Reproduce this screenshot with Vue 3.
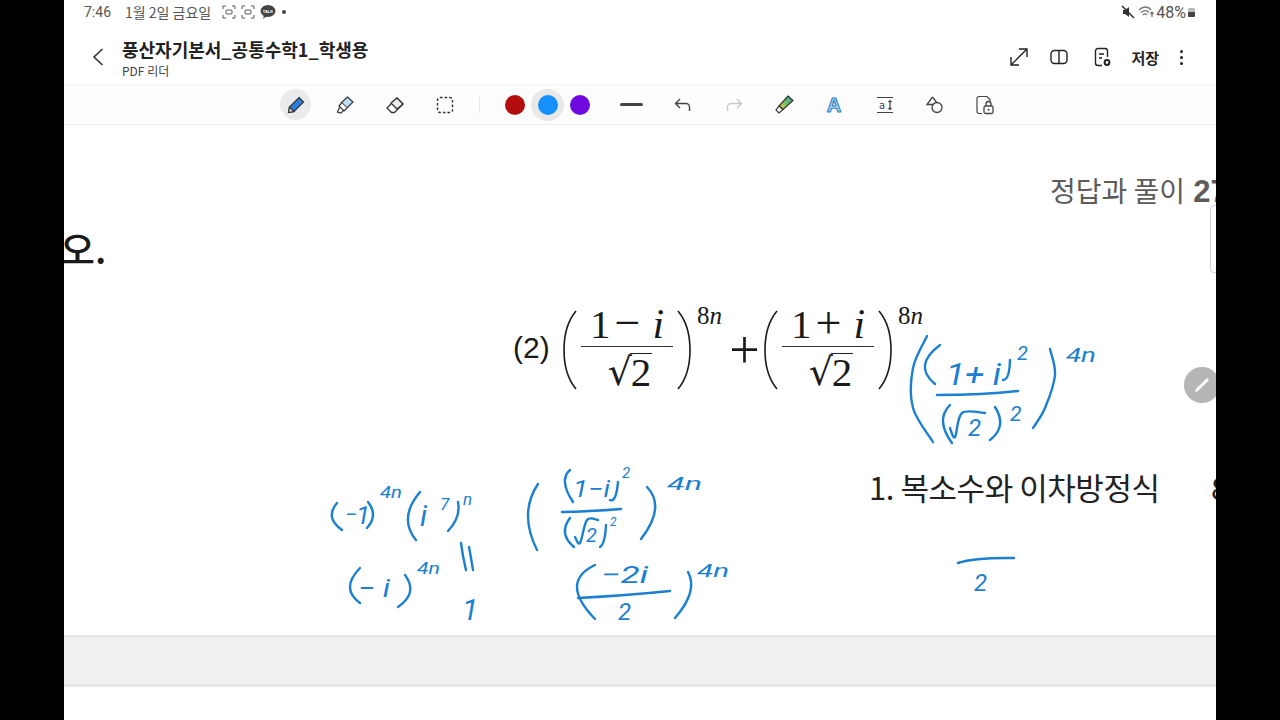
<script setup>
// pen strokes on the page, in screen coordinates
const strokes = [
  // top right fraction
  [[927,336],[913,368],[913,408],[933,442]],
  [[940,345],[925,365],[935,384]],
  [[1010,360],[1008,375],[1003,380]],
  [[937,395],[980,394],[1018,391]],
  [[950,405],[943,422],[952,443]],
  [[950,428],[955,437],[962,413],[985,413]],
  [[995,407],[1000,425],[990,440]],
  [[1050,349],[1055,375],[1045,408],[1033,428]],
  // left column
  [[337,503],[332,517],[342,530]],
  [[368,502],[373,515],[367,528]],
  [[420,492],[408,517],[416,540]],
  [[458,502],[457,517],[448,531]],
  [[360,568],[350,587],[360,603]],
  [[405,575],[410,592],[398,607]],
  // the two upright lines of the sideways equals
  [[461,543],[463,556],[466,570]],
  [[469,547],[471,558],[473,570]],
  // middle column
  [[538,484],[528,515],[537,550]],
  [[570,470],[565,483],[573,502]],
  [[618,482],[615,497],[610,500]],
  [[562,512],[590,511],[621,509]],
  [[570,518],[565,533],[574,547]],
  [[575,537],[580,543],[587,520],[598,520]],
  [[606,525],[604,540],[600,547]],
  [[647,487],[655,510],[641,539]],
  [[595,565],[577,587],[595,619]],
  [[578,598],[625,595],[670,591]],
  [[688,572],[690,593],[675,618]],
  // lone bar
  [[958,563],[980,559],[1014,558]],
]

// what was written with the pen, kept as text
const notes = [
  { x: 946, y: 385, size: 32, t: '1+ i', w: 55 },
  { x: 1017, y: 360, size: 20, t: '2' },
  { x: 968, y: 436, size: 24, t: '2' },
  { x: 1010, y: 421, size: 21, t: '2' },
  { x: 1066, y: 362, size: 20, t: '4n', w: 30 },
  { x: 345, y: 522, size: 22, t: '−' },
  { x: 356, y: 524, size: 26, t: '1' },
  { x: 380, y: 498, size: 16, t: '4n', w: 22 },
  { x: 420, y: 526, size: 30, t: 'i' },
  { x: 440, y: 510, size: 17, t: '7' },
  { x: 463, y: 505, size: 17, t: 'n' },
  { x: 358, y: 597, size: 26, t: '− i', w: 32 },
  { x: 417, y: 574, size: 16, t: '4n', w: 23 },
  { x: 462, y: 620, size: 30, t: '1' },
  { x: 573, y: 497, size: 23, t: '1−i', w: 37 },
  { x: 622, y: 478, size: 15, t: '2' },
  { x: 586, y: 542, size: 20, t: '2' },
  { x: 610, y: 526, size: 12, t: '2' },
  { x: 667, y: 490, size: 18, t: '4n', w: 35 },
  { x: 601, y: 583, size: 24, t: '−2i', w: 47 },
  { x: 618, y: 620, size: 24, t: '2' },
  { x: 697, y: 577, size: 18, t: '4n', w: 32 },
  { x: 974, y: 591, size: 24, t: '2' },
]

// smooth line through the points
function toPath(pts) {
  const [a, b, c] = pts
  if (pts.length === 3) {
    const cx = 2 * b[0] - (a[0] + c[0]) / 2
    const cy = 2 * b[1] - (a[1] + c[1]) / 2
    return `M${a[0]} ${a[1]} Q${cx} ${cy} ${c[0]} ${c[1]}`
  }
  let d = `M${pts[0][0]} ${pts[0][1]}`
  for (let i = 0; i < pts.length - 1; i++) {
    const p0 = pts[i - 1] || pts[i]
    const p1 = pts[i]
    const p2 = pts[i + 1]
    const p3 = pts[i + 2] || p2
    const c1x = p1[0] + (p2[0] - p0[0]) / 6
    const c1y = p1[1] + (p2[1] - p0[1]) / 6
    const c2x = p2[0] - (p3[0] - p1[0]) / 6
    const c2y = p2[1] - (p3[1] - p1[1]) / 6
    d += ` C${c1x} ${c1y} ${c2x} ${c2y} ${p2[0]} ${p2[1]}`
  }
  return d
}

const terms = ['−', '+']
</script>

<template>
  <div class="screen">
    <div class="tablet">
      <div class="status">
        <span class="time">7:46</span>
        <span class="date">1월 2일 금요일</span>
        <svg class="shot" width="14" height="14" viewBox="0 0 14 14"><path d="M1 4V1h3M10 1h3v3M13 10v3h-3M4 13H1v-3" /><rect x="4" y="5" width="6" height="4" rx="1" /></svg>
        <svg class="shot" width="14" height="14" viewBox="0 0 14 14"><path d="M1 4V1h3M10 1h3v3M13 10v3h-3M4 13H1v-3" /><rect x="4" y="5" width="6" height="4" rx="1" /></svg>
        <svg width="16" height="14" viewBox="0 0 16 14"><ellipse cx="8" cy="6" rx="7.5" ry="6" fill="#444" /><path d="M4 10l-1 4 4-3z" fill="#444" /><text x="8" y="8" class="talk">TALK</text></svg>
        <span class="dot"></span>
        <span class="grow"></span>
        <svg width="14" height="14" viewBox="0 0 14 14"><path d="M2 5h2l4-3v10L4 9H2z" fill="#333" /><path d="M1 1l12 12" stroke="#333" stroke-width="1.6" /></svg>
        <svg class="wifi" width="16" height="14" viewBox="0 0 16 14"><path d="M1 5c4-4 9-4 12 0M3 7.500c3-2.500 6-2.500 8 0M5 10c1.500-1.500 3-1.500 4 0" /><path d="M14 7v5M12.500 9l1.500-2 1.500 2" /></svg>
        <span class="battery-text">48%</span>
        <span class="battery"><i></i></span>
      </div>

      <header class="appbar">
        <svg class="back" width="12" height="20" viewBox="0 0 12 20"><path d="M10.500 2L2 10l8.500 8" /></svg>
        <div class="title-box">
          <div class="title">풍산자기본서_공통수학1_학생용</div>
          <div class="sub">PDF 리더</div>
        </div>
        <div class="actions">
          <svg width="20" height="20" viewBox="0 0 20 20"><path d="M2 18L18 2M10 2h8v8M2 10v8h8" /></svg>
          <svg class="book" width="20" height="20" viewBox="0 0 20 20"><rect x="2" y="3.500" width="16" height="13" rx="3.500" /><path d="M10 3.500v13" /></svg>
          <svg class="doc" width="20" height="20" viewBox="0 0 20 20"><path d="M10 18.500H6a2.500 2.500 0 0 1-2.500-2.500V4A2.500 2.500 0 0 1 6 1.500h7A2.500 2.500 0 0 1 15.500 4v6M7 7h5M7 11h3" /><circle cx="15" cy="15.500" r="2.400" stroke-width="2" /></svg>
          <span class="save">저장</span>
          <span class="more"><i></i><i></i><i></i></span>
        </div>
      </header>

      <div class="toolbar">
        <span class="tool active">
          <svg width="20" height="20" viewBox="0 0 20 20"><path d="M13 2.500l4.500 4.500L8 16.500l-5.500 1 1-5.500z" fill="#2a7fdc" stroke="#333" stroke-width="1.200" /><path d="M3.500 12l4.500 4.500-5.500 1z" fill="#ddd" stroke="#333" stroke-width="1.200" /></svg>
        </span>
        <span class="tool">
          <svg width="20" height="20" viewBox="0 0 20 20"><path d="M12.500 2l5.500 5-6 6-5.500-5.500z" fill="#bcdcf7" stroke="#333" stroke-width="1.200" /><path d="M6.500 8L4 11l5 5 3-3M4.500 12.500L2.500 17l3.500 1 2-2.500" fill="#fff" stroke="#333" stroke-width="1.200" /></svg>
        </span>
        <span class="tool">
          <svg width="20" height="20" viewBox="0 0 20 20"><path d="M12 3l6 6-8.500 8.500-3 0L2 13z" fill="#fff" stroke="#333" stroke-width="1.300" stroke-linejoin="round" /><path d="M12 3l6 6-6 5-6-6z" fill="#eee" stroke="#333" stroke-width="1.300" stroke-linejoin="round" /></svg>
        </span>
        <span class="tool">
          <svg width="20" height="20" viewBox="0 0 20 20"><rect x="2.500" y="2.500" width="15" height="15" rx="2.500" fill="none" stroke="#333" stroke-width="1.400" stroke-dasharray="2.600 2" /></svg>
        </span>
        <span class="divider"></span>
        <span class="swatch"><i class="red"></i></span>
        <span class="swatch picked"><i class="blue"></i></span>
        <span class="swatch"><i class="purple"></i></span>
        <span class="pen-width"></span>
        <span class="tool undo">
          <svg width="20" height="20" viewBox="0 0 20 20"><path d="M7 4L2.500 8.500 7 13M3 8.500h10a3.500 3.500 0 0 1 3.500 3.500v4" fill="none" stroke="#444" stroke-width="1.400" /></svg>
        </span>
        <span class="tool redo">
          <svg width="20" height="20" viewBox="0 0 20 20"><path d="M13 4l4.500 4.500L13 13M17 8.500H7A3.500 3.500 0 0 0 3.500 12v4" fill="none" stroke="#c9c9c9" stroke-width="1.400" /></svg>
        </span>
        <span class="tool">
          <svg width="22" height="22" viewBox="0 0 22 22">
            <defs><linearGradient id="pen" x1="0" y1="1" x2="1" y2="0"><stop offset="0" stop-color="#e8d44c" /><stop offset=".5" stop-color="#6fbf5a" /><stop offset="1" stop-color="#3d8fd0" /></linearGradient></defs>
            <path d="M15 2l5 4.500L10 15.500 6 12z" fill="url(#pen)" stroke="#333" stroke-width="1.200" />
            <path d="M6 12l-3 4 3 3 4-3.500z" fill="#fff" stroke="#333" stroke-width="1.200" />
          </svg>
        </span>
        <span class="tool">
          <svg width="20" height="20" viewBox="0 0 20 20"><text x="10" y="16.500" class="outline-a">A</text></svg>
        </span>
        <span class="tool">
          <svg width="20" height="20" viewBox="0 0 20 20"><path d="M2 2.500h16M2 17.500h16M15 5.500v9M13.500 7L15 5.500 16.500 7M13.500 13l1.500 1.500 1.500-1.500" fill="none" stroke="#444" stroke-width="1.200" /><text x="7" y="13.500" class="small-a">a</text></svg>
        </span>
        <span class="tool">
          <svg width="20" height="20" viewBox="0 0 20 20"><path d="M7.500 2L2 9.500h6.500" fill="none" stroke="#444" stroke-width="1.300" /><path d="M7.500 2l4.500 6" fill="none" stroke="#444" stroke-width="1.300" /><circle cx="12" cy="12.500" r="5" fill="none" stroke="#444" stroke-width="1.300" /></svg>
        </span>
        <span class="tool">
          <svg width="20" height="20" viewBox="0 0 20 20"><path d="M7 18.500H4A2 2 0 0 1 2 16.500V3.500A2 2 0 0 1 4 1.500h8l3 3v2" fill="none" stroke="#444" stroke-width="1.200" /><rect x="9" y="11" width="9" height="7.500" rx="1.500" fill="none" stroke="#444" stroke-width="1.300" /><path d="M11 11V9a2.500 2.500 0 0 1 5 0v2" fill="none" stroke="#444" stroke-width="1.300" /><circle cx="13.500" cy="14.700" r="1" fill="#444" /></svg>
        </span>
      </div>

      <div class="page">
        <span class="big-end">오.</span>
        <span class="answer">정답과 풀이 <b>27</b></span>
        <span class="side-tab"></span>

        <div class="formula">
          <span class="label">(2)</span>
          <template v-for="(term, n) in terms" :key="n">
            <span v-if="n" class="plus">+</span>
            <svg class="paren" width="16" height="80" viewBox="0 0 16 80"><path d="M15 1C-1 20 -1 60 15 79" /></svg>
            <div class="frac">
              <div class="num">1<span class="op">{{ term }}</span><em>i</em></div>
              <div class="den"><span class="radical">√</span><span class="radicand">2</span></div>
            </div>
            <svg class="paren" width="16" height="80" viewBox="0 0 16 80"><path d="M1 1C17 20 17 60 1 79" /></svg>
            <sup class="power">8<em>n</em></sup>
          </template>
        </div>

        <span class="section">1. 복소수와 이차방정식</span>
        <span class="next-page">8</span>

        <svg class="ink" viewBox="64 125 1152 510" width="1152" height="510">
          <path v-for="(s, i) in strokes" :key="i" :d="toPath(s)" />
          <text
            v-for="(n, i) in notes"
            :key="'t' + i"
            :x="n.x"
            :y="n.y"
            :font-size="n.size"
            :textLength="n.w"
            :lengthAdjust="n.w ? 'spacingAndGlyphs' : undefined"
          >{{ n.t }}</text>
        </svg>

        <span class="fab">
          <svg width="20" height="20" viewBox="0 0 20 20"><path d="M15 3l2 2L6 16l-3 1 1-3z" fill="#fff" /></svg>
        </span>
      </div>

      <div class="gap"></div>
    </div>
  </div>
</template>

<style scoped>
.screen {
  display: flex;
  justify-content: center;
  height: 720px;
  background: #000;
  font-family: "Noto Sans CJK KR", "Noto Sans", sans-serif;
  color: #222;
}

.tablet {
  display: flex;
  flex-direction: column;
  width: 1152px;
  background: #fff;
  overflow: hidden;
}

.status {
  display: flex;
  align-items: center;
  height: 24px;
  padding: 0 21px 0 20px;
  font-size: 14px;
  color: #555;
  flex-shrink: 0;
}

.time { margin-right: 14px; font-family: Roboto, sans-serif; }
.date { margin-right: 11px; font-size: 14px; }
.shot { margin-right: 5px; fill: none; stroke: #555; stroke-width: 1; }
.talk { font-size: 4px; fill: #fff; text-anchor: middle; font-family: "Liberation Sans", sans-serif; font-weight: 700; }
.dot { width: 4px; height: 4px; margin-left: 6px; border-radius: 50%; background: #444; }
.grow { flex: 1; }
.wifi { margin-left: 3px; fill: none; stroke: #777; stroke-width: 1.300; }
.battery-text { margin-left: 2px; font-family: Roboto, sans-serif; font-size: 16px; color: #555; }
.battery { position: relative; width: 7px; height: 9px; margin-left: 2px; background: #bbb; border-radius: 1px; overflow: hidden; }
.battery i { position: absolute; left: 0; right: 0; bottom: 0; height: 5px; background: #444; }

.appbar {
  display: flex;
  align-items: center;
  height: 60px;
  flex-shrink: 0;
}

.back { margin-left: 28px; margin-top: 6px; fill: none; stroke: #333; stroke-width: 1.600; }

.title-box { margin-left: 18px; padding-top: 8px; }
.title { font-size: 18px; font-weight: 700; line-height: 24px; color: #222; }
.sub { font-size: 12px; line-height: 16px; color: #444; margin-top: 2px; }

.actions {
  display: flex;
  align-items: center;
  margin-left: auto;
  padding-right: 33px;
  padding-top: 6px;
  height: 100%;
  box-sizing: border-box;
}

.actions svg { margin-left: 20px; fill: none; stroke: #222; stroke-width: 1.400; }
.actions .doc { margin-left: 23px; }
.save { margin-left: 19px; font-size: 15px; font-weight: 700; }
.more { display: flex; flex-direction: column; gap: 3px; margin-left: 21px; }
.more i { width: 3px; height: 3px; border-radius: 50%; background: #222; }

.toolbar {
  display: flex;
  align-items: center;
  box-sizing: border-box;
  height: 41px;
  padding-left: 207px;
  border-top: 1px solid #f4f4f4;
  border-bottom: 1px solid #efefef;
  background: #fdfdfd;
  flex-shrink: 0;
}

.tool {
  display: flex;
  align-items: center;
  justify-content: center;
  width: 49.600px;
  height: 31px;
}

.undo ~ .tool { width: 50.200px; }
.redo { margin-left: 1px; }

.tool.active { position: relative; }
.tool.active::before {
  content: "";
  position: absolute;
  left: 9px;
  top: 0;
  width: 31px;
  height: 31px;
  border-radius: 50%;
  background: #ebebeb;
}
.tool.active svg { position: relative; }

.divider { width: 1px; height: 16px; margin: 0 19px 0 9.500px; background: #e6e6e6; }

.swatch {
  display: flex;
  align-items: center;
  justify-content: center;
  width: 32.500px;
  height: 32px;
  border-radius: 50%;
}
.swatch i { width: 20px; height: 20px; border-radius: 50%; }
.swatch.picked { background: #e8e8e8; }
.red { background: #b50d0d; }
.blue { background: #1590fb; }
.purple { background: #6e0ae0; }

.pen-width { width: 23px; height: 3px; margin-left: 24px; border-radius: 2px; background: #444; }
.undo { margin-left: 15px; }

.outline-a { font-family: "Liberation Sans", sans-serif; font-size: 20px; font-weight: 700; text-anchor: middle; fill: #bcdcf7; stroke: #2a7fc8; stroke-width: 1.100; stroke-linejoin: round; }
.small-a { font-family: "DejaVu Sans Mono", monospace; font-size: 10px; text-anchor: middle; fill: #444; }

.page {
  position: relative;
  height: 510px;
  flex-shrink: 0;
  overflow: hidden;
}

.big-end {
  position: absolute;
  left: -4px;
  top: 98px;
  font-size: 38px;
  line-height: 50px;
  font-weight: 500;
  color: #1a1a1a;
}

.answer {
  position: absolute;
  left: 986px;
  top: 46px;
  font-size: 28px;
  line-height: 38px;
  font-weight: 400;
  color: #5c5c5c;
  white-space: nowrap;
}
.answer b { font-weight: 700; font-family: "Liberation Sans", sans-serif; font-size: 31px; margin-left: 2px; }

.side-tab {
  position: absolute;
  right: -6px;
  top: 80px;
  width: 10px;
  height: 66px;
  border: 1px solid #d4d4d4;
  border-radius: 4px;
}

.formula {
  position: absolute;
  left: 449px;
  top: 185px;
  display: flex;
  align-items: center;
  height: 80px;
  font-family: "Liberation Serif", serif;
  color: #1a1a1a;
}

.label { font-family: "Liberation Sans", sans-serif; font-size: 30px; width: 48px; margin-top: -4px; }
.paren { fill: none; stroke: #1a1a1a; stroke-width: 1.600; flex-shrink: 0; }

.frac {
  display: flex;
  flex-direction: column;
  align-items: center;
  width: 92px;
  margin: 0 4px;
}

.num {
  display: flex;
  align-items: baseline;
  justify-content: center;
  box-sizing: border-box;
  height: 40px;
  line-height: 32px;
  font-size: 41px;
  border-bottom: 1.500px solid #333;
  width: 100%;
}
.num em { margin-left: 8px; font-size: 42px; }
.op { margin: 0 4px; font-size: 46px; }

.den {
  display: flex;
  align-items: flex-start;
  height: 40px;
  margin-top: 6px;
  margin-left: 6px;
}
.radical { font-size: 38px; line-height: 44px; font-family: "DejaVu Serif", serif; margin-top: -3px; margin-right: -2px; }
.radicand { font-size: 41px; line-height: 36px; border-top: 1.500px solid #222; padding: 0 1px; }

.power { align-self: flex-start; width: 30px; margin: -9px 0 0 4px; font-size: 25px; line-height: 30px; }
.plus { width: 35px; font-size: 54px; text-align: center; line-height: 50px; }

.section {
  position: absolute;
  left: 805px;
  top: 340px;
  font-size: 31px;
  line-height: 44px;
  font-weight: 400;
  letter-spacing: -0.450px;
  color: #222;
  white-space: nowrap;
}

.next-page {
  position: absolute;
  left: 1147px;
  top: 340px;
  font-size: 31px;
  line-height: 44px;
  color: #222;
}

.ink {
  position: absolute;
  left: 0;
  top: 0;
  fill: none;
  stroke: #1a80cf;
  stroke-width: 2.400;
  stroke-linecap: round;
  stroke-linejoin: round;
}
.ink text {
  fill: #1a80cf;
  stroke: none;
  font-family: Roboto, sans-serif;
  font-style: italic;
}

.fab {
  position: absolute;
  left: 1120px;
  top: 242px;
  display: flex;
  align-items: center;
  justify-content: center;
  width: 36px;
  height: 36px;
  border-radius: 50%;
  background: #b6b6b6;
}

.gap {
  height: 52px;
  flex-shrink: 0;
  background: #f0f0f0;
  border-top: 2px solid #e6e6e6;
  border-bottom: 3px solid #e6e6e6;
  box-sizing: border-box;
}
</style>

<style>
html, body { overflow: hidden; }
</style>
